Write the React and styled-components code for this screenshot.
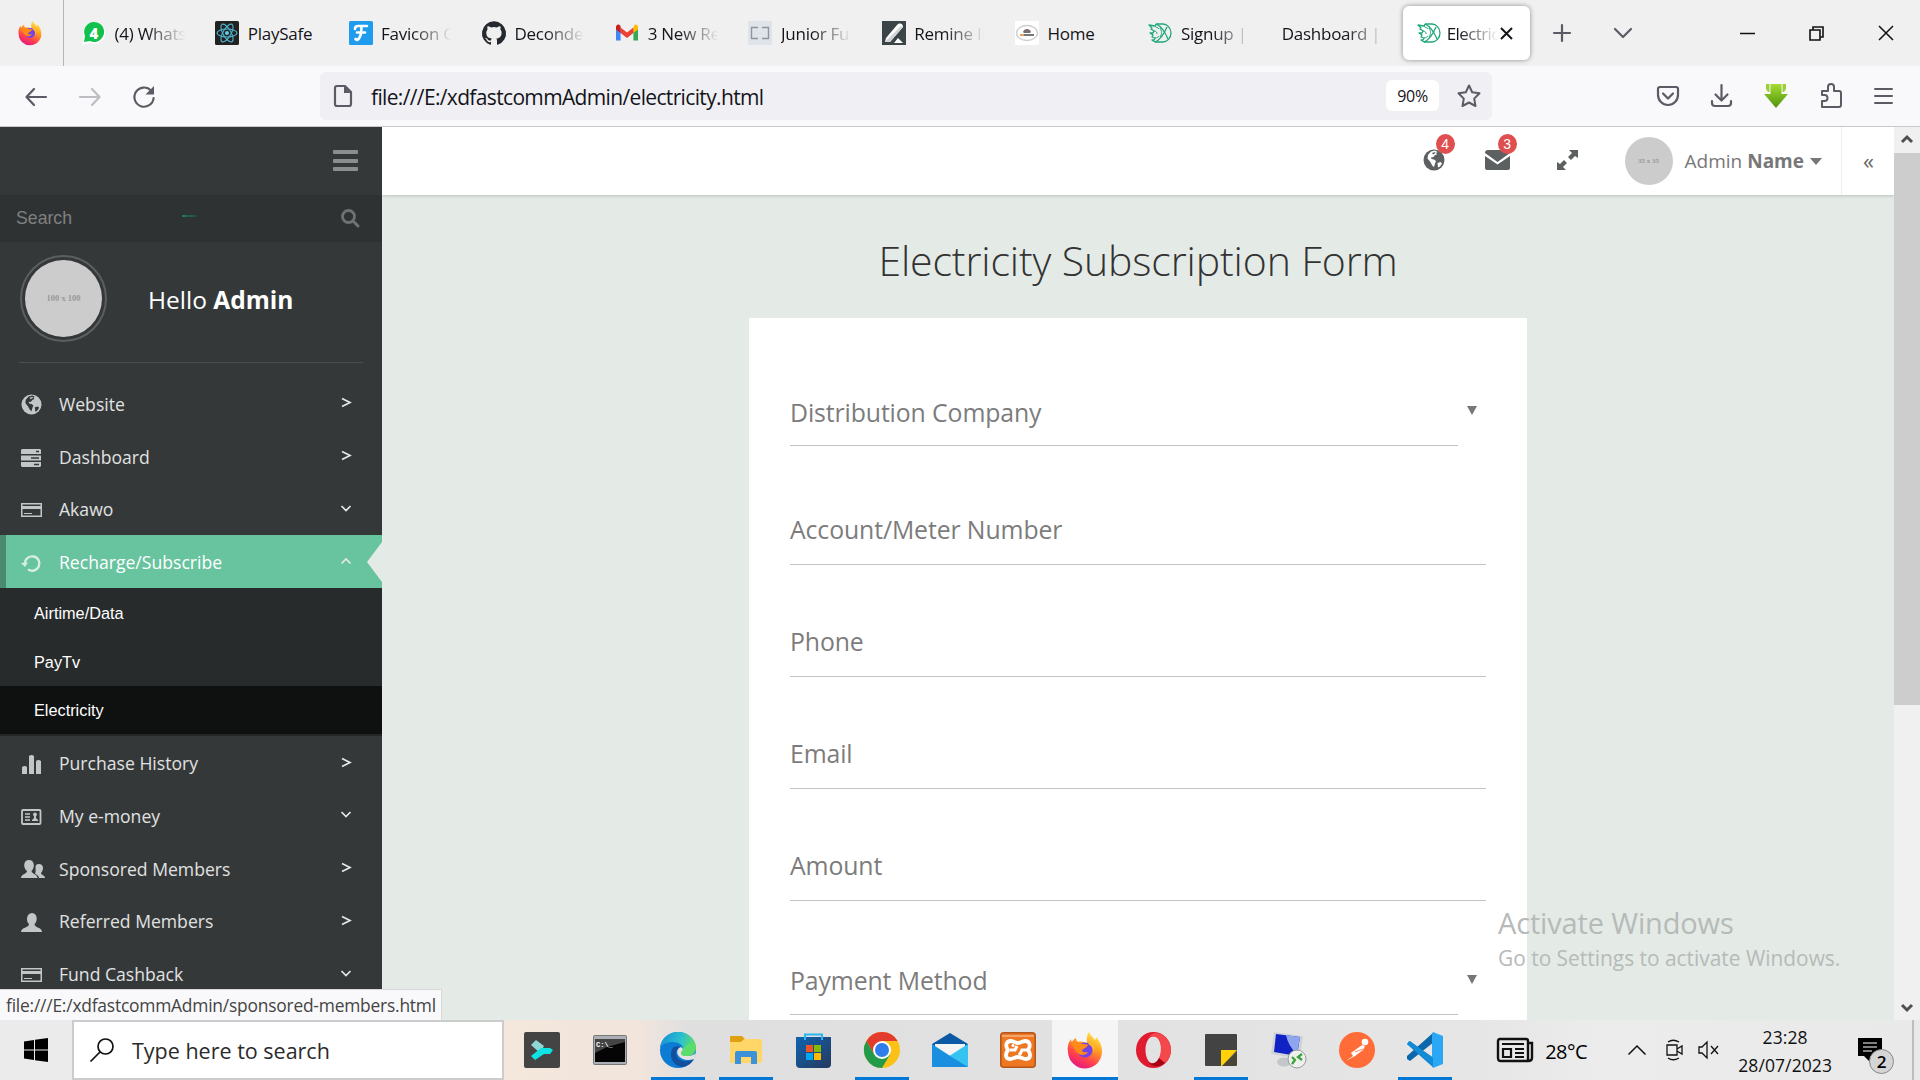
import React from "react";
import styled, { createGlobalStyle, css } from "styled-components";

const ui = `"Open Sans", "Noto Sans", sans-serif`;
const arial = `"Liberation Sans", Arial, sans-serif`;

const GlobalStyle = createGlobalStyle`
  * { box-sizing: border-box; }
  body { margin: 0; background: #e4eae6; font-family: ${ui}; overflow: hidden; }
  svg { display: block; flex: none; overflow: visible; }
`;

const Screen = styled.div`
  width: 1920px;
  height: 1080px;
  display: flex;
  flex-direction: column;
  overflow: hidden;
`;

/* ---------- browser chrome ---------- */

const TabStrip = styled.header`
  height: 66px;
  display: flex;
  align-items: stretch;
  background: #f0f0f0;
`;

const PinnedTab = styled.div`
  width: 64px;
  padding-left: 18px;
  display: flex;
  align-items: center;
  border-right: 1px solid #b5b5b5;
`;

const Tabs = styled.div`
  display: flex;
  align-items: center;
  padding-left: 6px;
`;

const Tab = styled.div`
  width: ${(p) => p.$width || 133.3}px;
  height: 54px;
  padding-left: 12px;
  display: flex;
  align-items: center;
  gap: 8.5px;
`;

const ActiveTab = styled.div`
  width: 127px;
  height: 54px;
  margin-left: 6px;
  padding: 0 17px 0 14px;
  display: flex;
  align-items: center;
  border-radius: 6px;
  background: #fff;
  box-shadow: 0 0 5px rgba(0, 0, 0, 0.42);
`;

const TabLabel = styled.span`
  flex: none;
  width: ${(p) => p.$width || 71}px;
  padding-top: 2px;
  overflow: hidden;
  white-space: nowrap;
  font: 17px/26px ${ui};
  letter-spacing: ${(p) => p.$track || -0.25}px;
  color: #15141a;
  ${(p) =>
    !p.$full &&
    css`
      mask-image: linear-gradient(to right, #000 calc(100% - 40px), transparent 99%);
    `}
`;

const TabActions = styled.div`
  display: flex;
  align-items: center;
  gap: 43px;
  padding-left: 23px;
`;

const WindowControls = styled.div`
  display: flex;
  align-items: center;
  gap: 54px;
  margin-left: auto;
  padding-right: 26px;
`;

const Toolbar = styled.div`
  height: 61px;
  display: flex;
  align-items: center;
  padding-bottom: 1px;
  background: #f9f9fb;
  border-bottom: 1px solid #c8c8cb;
`;

const NavButtons = styled.div`
  width: 320px;
  padding: 2px 0 0 25px;
  display: flex;
  align-items: center;
  gap: 32px;
`;

const AddressBar = styled.div`
  width: 1172px;
  height: 48px;
  padding: 0 11px 0 14px;
  display: flex;
  align-items: center;
  border-radius: 6px;
  background: #f0f0f4;
`;

const Url = styled.span`
  margin-left: 19px;
  padding-top: 2px;
  flex: 1;
  font: 21px/30px ${ui};
  letter-spacing: -0.65px;
  color: #15141a;
`;

const Zoom = styled.span`
  width: 53px;
  height: 31px;
  margin-right: 18px;
  border-radius: 6px;
  background: #fff;
  text-align: center;
  font: 16px/32px ${ui};
  letter-spacing: -0.3px;
  color: #15141a;
`;

const ToolIcons = styled.div`
  margin-left: auto;
  padding-right: 27px;
  display: flex;
  align-items: center;
  gap: 32.3px;
`;

/* ---------- page ---------- */

const Viewport = styled.div`
  height: 893px;
  display: flex;
  position: relative;
`;

const Sidebar = styled.aside`
  width: 382px;
  height: 893px;
  overflow: hidden;
  background: #353839;
  color: #e0e2e2;
`;

const SideHeader = styled.div`
  height: 68px;
  padding: 23px 24px 0 0;
  display: flex;
  justify-content: flex-end;
  box-shadow: 0 1px 3px rgba(0, 0, 0, 0.25);
`;

const Burger = styled.div`
  width: 25px;
  height: 21px;
  display: flex;
  flex-direction: column;
  justify-content: space-between;
`;

const BurgerBar = styled.i`
  height: 4px;
  border-radius: 1px;
  background: #8c8e8e;
`;

const SideSearch = styled.div`
  height: 47px;
  padding: 0 23px 2px 16px;
  display: flex;
  align-items: center;
  justify-content: space-between;
  background: #2f3233;
  font: 17.7px/24px ${arial};
  color: #7e8080;
`;

const LogoSpeck = styled.i`
  width: 15px;
  height: 2px;
  margin: -3px 0 0 -35px;
  border-left: 4px solid #1c7a58;
  background: linear-gradient(to right, #1c6149 60%, #353839);
`;

const Profile = styled.div`
  height: 121px;
  margin: 0 19px;
  padding: 13px 0 0 1px;
  display: flex;
  align-items: flex-start;
  gap: 41px;
  border-bottom: 1px solid #4b4e4f;
`;

const Ring = styled.div`
  width: 87px;
  height: 87px;
  flex: none;
  padding: 3px;
  border: 2px solid #5c5f60;
  border-radius: 50%;
`;

const Portrait = styled.div`
  width: ${(p) => p.$size}px;
  height: ${(p) => p.$size}px;
  flex: none;
  display: flex;
  align-items: center;
  justify-content: center;
  border-radius: 50%;
  background: #ccc;
  color: #999;
  font: bold ${(p) => p.$font}px/1 "Liberation Serif", serif;
`;

const Greeting = styled.div`
  margin-top: 27px;
  white-space: nowrap;
  font: 24.5px/36px ${ui};
  color: #fff;
`;

const Menu = styled.nav`
  padding-top: 14px;
`;

const MenuRow = styled.div`
  height: 52.8px;
  padding: 0 31px 0 ${(p) => (p.$active ? 15 : 21)}px;
  display: flex;
  align-items: center;
  position: relative;
  font: 17.6px/26px ${ui};
  color: ${(p) => (p.$active ? "#fff" : "#e0e2e2")};
  ${(p) =>
    p.$active &&
    css`
      background: #68c39f;
      border-left: 6px solid #4a8a70;
      &::after {
        content: "";
        position: absolute;
        right: 0;
        top: 7px;
        border: 20px solid transparent;
        border-width: 20px 15px 20px 0;
        border-right-color: #e4eae6;
      }
    `}
`;

const MenuIcon = styled.span`
  width: 38px;
  padding-top: 3px;
  flex: none;
`;

const MenuText = styled.span`
  flex: 1;
  padding-top: 1px;
`;

const Submenu = styled.div`
  background: #282b2c;
  border-bottom: 2px solid #232526;
`;

const SubItem = styled.div`
  height: ${(p) => p.$h}px;
  padding-left: 34px;
  display: flex;
  align-items: center;
  font: 16.3px/24px ${arial};
  color: #fff;
  background: ${(p) => (p.$on ? "#0f1111" : "transparent")};
`;

const Main = styled.main`
  width: 1512px;
  display: flex;
  flex-direction: column;
  align-items: center;
  overflow: hidden;
  background: #e4eae6;
`;

const TopBar = styled.div`
  width: 100%;
  height: 68px;
  flex: none;
  display: flex;
  align-items: center;
  justify-content: flex-end;
  background: #fff;
  box-shadow: 0 1px 3px rgba(0, 0, 0, 0.18);
`;

const Notice = styled.div`
  position: relative;
  margin-right: ${(p) => p.$gap}px;
  margin-top: ${(p) => p.$drop || 0}px;
`;

const Count = styled.span`
  position: absolute;
  left: ${(p) => p.$left}px;
  top: ${(p) => p.$top}px;
  width: 19px;
  height: 20px;
  border-radius: 50%;
  background: #e04f4f;
  color: #fff;
  text-align: center;
  font: 14px/20px ${arial};
`;

const UserName = styled.div`
  margin-left: 12px;
  white-space: nowrap;
  font: 19px/26px ${ui};
  letter-spacing: 0;
  color: #777;
`;

const Caret = styled.i`
  margin: 0 19px 0 6px;
  border: 6px solid transparent;
  border-width: 7px 6px 0;
  border-top-color: #777;
`;

const Collapse = styled.div`
  width: 53px;
  height: 68px;
  padding-left: 1px;
  border-left: 1px solid #eee;
  text-align: center;
  font: 22px/66px ${ui};
  color: #666;
`;

const Title = styled.h1`
  margin: 37px 0 0;
  height: 86px;
  font: 300 41px/56px ${ui};
  letter-spacing: -0.12px;
  white-space: nowrap;
  color: #333;
`;

const Card = styled.div`
  width: 778px;
  height: 702px;
  flex: none;
  padding: 38px 41px 0;
  background: #fff;
`;

const Field = styled.div`
  height: ${(p) => p.$h}px;
  margin-right: ${(p) => (p.$select ? 28 : 0)}px;
  padding-bottom: ${(p) => p.$pad}px;
  display: flex;
  align-items: flex-end;
  position: relative;
  border-bottom: 1px solid #c4c4c4;
  font: 24.8px/34px ${ui};
  color: #7c7c7c;
  letter-spacing: -0.1px;
`;

const SelectArrow = styled.i`
  position: absolute;
  right: -19px;
  bottom: 30px;
  border: 5.5px solid transparent;
  border-width: 9px 5.5px 0;
  border-top-color: #777;
`;

const Scrollbar = styled.div`
  width: 26px;
  padding: 8px 0 8px;
  display: flex;
  flex-direction: column;
  align-items: center;
  background: #f0f0f0;
`;

const Thumb = styled.div`
  width: 26px;
  height: 552px;
  margin: 9px 0 auto;
  background: #cdcdcd;
`;

const StatusTip = styled.div`
  position: absolute;
  left: 0;
  bottom: 0;
  width: 442px;
  height: 31px;
  padding-left: 6px;
  background: #f9f9fb;
  border: solid #d9d9d9;
  border-width: 1px 1px 0 0;
  white-space: nowrap;
  font: 17.4px/31px ${ui};
  letter-spacing: -0.21px;
  color: #444;
`;

const Watermark = styled.div`
  position: absolute;
  left: 1498px;
  top: 776px;
  white-space: nowrap;
  color: #b6bab8;
`;

const WatermarkTitle = styled.div`
  font: 29px/40px ${ui};
  letter-spacing: -0.15px;
`;

const WatermarkText = styled.div`
  font: 20.9px/30px ${ui};
`;

/* ---------- taskbar ---------- */

const Taskbar = styled.footer`
  height: 60px;
  display: flex;
  align-items: stretch;
  background: linear-gradient(to right, #ebebeb 72px, #f4e7dc 503px, #f1e5dc 640px, #dfdfe0 690px, #e2e2e2 1120px, #e6e6e6 1480px, #ececec 1600px, #e9e9e9);
`;

const Start = styled.div`
  width: 72px;
  padding: 18px 0 0 24px;
`;

const SearchBox = styled.div`
  width: 432px;
  padding: 2px 0 0 16px;
  display: flex;
  align-items: center;
  gap: 18px;
  border: 2px solid #ccc;
  background: #fff;
  font: 21.5px/30px ${ui};
  letter-spacing: 0;
  color: #2b2b2b;
`;

const Apps = styled.div`
  display: flex;
  padding-left: 4px;
`;

const AppCell = styled.div`
  width: 67.95px;
  display: flex;
  justify-content: center;
`;

const AppFace = styled.div`
  width: ${(p) => (p.$active ? 66 : 54)}px;
  padding-top: 3px;
  display: flex;
  align-items: center;
  justify-content: center;
  border-bottom: 3px solid ${(p) => (p.$open ? "#0078d7" : "transparent")};
  background: ${(p) => (p.$active ? "#f5f5f5" : "transparent")};
  background-clip: padding-box;
`;

const Tray = styled.div`
  flex: 1;
  margin-left: 38px;
  display: flex;
  align-items: center;
`;

const Temperature = styled.span`
  width: 95px;
  padding: 3px 0 0 12px;
  font: 20px/28px ${ui};
  letter-spacing: -0.5px;
`;

const TrayIcons = styled.div`
  display: flex;
  align-items: center;
  gap: 18px;
`;

const Clock = styled.div`
  width: 100px;
  margin-left: 15px;
  padding-top: 1px;
  text-align: center;
  white-space: nowrap;
  font: 17.5px/28px ${ui};
  letter-spacing: 0.1px;
  color: #111;
`;

const Notes = styled.div`
  position: relative;
  margin: 0 30px 0 auto;
`;

const NotesCount = styled.span`
  position: absolute;
  left: 11px;
  top: 11px;
  width: 25px;
  height: 25px;
  border: 1px solid #888;
  border-radius: 50%;
  background: #d5d5d5;
  text-align: center;
  font: 600 17px/23px ${ui};
`;

const PeekEdge = styled.div`
  width: 8px;
  height: 60px;
  border-left: 2px solid #bdbdbd;
`;

/* ---------- drawings ---------- */

const Draw = ({ w, h, box, children, ...rest }) => (
  <svg width={w} height={h} viewBox={box || `0 0 ${w} ${h}`} fill="none" {...rest}>
    {children}
  </svg>
);

const Firefox = ({ s = 24, id }) => (
  <Draw w={s} h={s} box="0 0 36 36">
    <defs>
      <linearGradient id={id} x1="0.8" y1="0" x2="0.3" y2="1">
        <stop offset="0" stopColor="#fff14f" />
        <stop offset="0.4" stopColor="#ff9a1f" />
        <stop offset="0.72" stopColor="#ff3f4f" />
        <stop offset="1" stopColor="#e31587" />
      </linearGradient>
    </defs>
    <path d="M22 0c1 3 4 5 6 8 1-1 1-2 1-3 4 4 6 9 6 14a17 17 0 0 1-34 1c-1-5 0-9 3-13 0 1 0 2 1 3 1-2 2-3 4-4 0 2 1 3 2 4 4-1 7 0 9 2 0-4-1-8 2-12Z" fill={`url(#${id})`} />
    <circle cx="18" cy="18" r="7.6" fill="#7542e5" />
    <path d="M4 12c5-3 8-2 11 0 3 0 5 0 6 1-1 3-5 3-6 6 2 2 4 1 6 1-2 4-9 4-12-1-2-3-3-4-5-7Z" fill="#ff8a16" />
    <path d="M21 12c4 2 6 5 5 9 3-4 2-9-1-12Z" fill="#ffb52b" />
  </Draw>
);

const WhatsApp = () => (
  <Draw w={24} h={24}>
    <path d="M0 24l2-8A11 11 0 1 1 8 22Z" fill="#fff" />
    <path d="M2 21l1-6a10 10 0 1 1 5 5Z" fill="#12c14c" />
    <text x="12" y="17.5" textAnchor="middle" fill="#fff" fontFamily="Open Sans" fontWeight="800" fontSize="15">4</text>
  </Draw>
);

const ReactMark = () => (
  <Draw w={24} h={24}>
    <rect width="24" height="24" rx="1.5" fill="#222" />
    <g stroke="#4fb6d0" strokeWidth="1.1">
      <ellipse cx="12" cy="12" rx="10" ry="4" />
      <ellipse cx="12" cy="12" rx="10" ry="4" transform="rotate(60 12 12)" />
      <ellipse cx="12" cy="12" rx="10" ry="4" transform="rotate(120 12 12)" />
    </g>
    <circle cx="12" cy="12" r="2" fill="#5fd0ec" />
  </Draw>
);

const FaviconMark = () => (
  <Draw w={24} h={24}>
    <rect width="24" height="24" rx="1.5" fill="#209cee" />
    <path d="M6 8c0-2 1-3 3-3h9M12.500 5c0 5-1 11-3 13-1 1-2 1-3 0M8 11.500h8" stroke="#fff" strokeWidth="2.6" strokeLinecap="round" />
  </Draw>
);

const GitHub = () => (
  <Draw w={24} h={24}>
    <path fill="#24292f" d="M12 .3a12 12 0 0 0-3.8 23.4c.6.1.8-.3.8-.6v-2c-3.3.7-4-1.6-4-1.6-.6-1.4-1.4-1.8-1.4-1.8-1-.7.1-.7.1-.7 1.2 0 1.9 1.2 1.9 1.2 1 1.8 2.8 1.3 3.5 1 0-.8.4-1.3.7-1.6-2.7-.3-5.5-1.3-5.5-6 0-1.2.5-2.3 1.3-3.1-.2-.4-.6-1.6 0-3.2 0 0 1-.3 3.4 1.2a11.5 11.5 0 0 1 6 0c2.3-1.5 3.3-1.2 3.3-1.2.6 1.6.2 2.8 0 3.2.9.8 1.3 1.9 1.3 3.2 0 4.6-2.8 5.6-5.5 5.9.5.4.9 1 .9 2.2v3.3c0 .3.1.7.8.6A12 12 0 0 0 12 .3" />
  </Draw>
);

const Gmail = () => (
  <Draw w={24} h={24}>
    <path d="M1 6v13.500h4.600V9.500Z" fill="#4285f4" />
    <path d="M23 6v13.500h-4.600V9.500Z" fill="#34a853" />
    <path d="M18.400 7v5L23 8.500V6c0-2-2-3-3.500-2Z" fill="#fbbc04" />
    <path d="M5.600 6.500 12 11.500l6.400-5v5.500L12 17l-6.400-5Z" fill="#ea4335" />
    <path d="M1 6c0-2 2-3 3.500-2l1.100 1v7L1 8.500Z" fill="#c5221f" />
  </Draw>
);

const Brackets = () => (
  <Draw w={24} h={24}>
    <rect width="24" height="24" fill="#dfe4ea" />
    <path d="M10 6.500H3.500v11H10M14 6.500h6.500v11H14" stroke="#8f959b" strokeWidth="1.4" />
  </Draw>
);

const Remine = () => (
  <Draw w={24} h={24}>
    <rect width="24" height="24" fill="#3b4548" />
    <path d="M4 17 15 4c3-3 6-1 6 2L8 21H3Z" fill="#fff" />
    <path d="M5 19 19 5l2 1L8 21H3Z" fill="#d0d4d5" />
    <path d="M12 22l4-5 5 5Z" fill="#fff" />
  </Draw>
);

const HomeMark = () => (
  <Draw w={24} h={24}>
    <rect width="24" height="24" fill="#fff" />
    <ellipse cx="12" cy="12" rx="10.500" ry="7.500" stroke="#cfcfcf" strokeWidth="1.400" />
    <path d="M8 11c1-4 7-4 8 0l-1 1H9Z" fill="#77706c" />
    <path d="M5 14h4" stroke="#eba15d" strokeWidth="2" />
    <path d="M9 14h10" stroke="#74787a" strokeWidth="2" />
  </Draw>
);

const Bird = () => (
  <Draw w={24} h={24}>
    <g stroke="#20a67b" strokeWidth="1.300" strokeLinejoin="round">
      <path d="M8 3h7c4 0 8 4 8 9s-4 9-8 9H7" />
      <path d="M8 3c5 2 9 8 12 15M7 21c5-2 9-8 12-15" />
      <path d="M12 7c2 3 2 6 0 9" strokeWidth="1" />
      <path d="M8 3 7 5 1 4l3 3-1 1 3 2-1 2H2l3 2-1 2 3 1-1 2h-2l3 2" />
      <path d="M7 5c1 2 3 1 4 3M6 10c2 0 3 1 3 3M7 17c2 0 3-1 4-2" strokeWidth="1" />
    </g>
  </Draw>
);

const line = { stroke: "#5b5b66", strokeWidth: 2.2, strokeLinecap: "round", strokeLinejoin: "round" };

const Globe = ({ s, color, hole }) => (
  <Draw w={s} h={s} box="0 0 22 22">
    <circle cx="11" cy="11" r="10.500" fill={color} />
    <path d="M8 2.500l4-1 2.500 1.500-1.500 1 1 1.500-2 .5-1.500 2-2.500.5.5 1.500 2.500.5 2 1.500-1 2.500-1 3.500C9 17 8.500 14.500 7 12.500L4.500 9.500 5 6Z" fill={hole} />
    <path d="M14.500 14l3-1 1.500 1.500-2 3-2 1Z" fill={hole} />
    <path d="M9 4l3-1 .5 1-2.500 1.500Z" fill={color} />
  </Draw>
);

const glyph = "#c3c6c6";
const glyphs = {
  globe: <Globe s={21} color={glyph} hole="#353839" />,
  server: (
    <Draw w={21} h={18}>
      <path d="M1 0h18l1 1v4H0V1ZM0 6.500h20v5H0ZM0 13h20v4l-1 1H1l-1-1Z" fill={glyph} />
      <path d="M15 2.500h3M10 9h8M13 15.500h5" stroke="#353839" strokeWidth="1.500" />
    </Draw>
  ),
  card: (
    <Draw w={21} h={14}>
      <path d="M.75.75h19.500v12.500H.75Z" stroke={glyph} strokeWidth="1.500" />
      <path d="M1 4.500h19" stroke={glyph} strokeWidth="3" />
      <path d="M3 10.500h8" stroke={glyph} strokeWidth="1" />
    </Draw>
  ),
  refresh: (
    <Draw w={21} h={17}>
      <path d="M4 8.500a7.200 7.200 0 1 1 3 5.900" stroke="#d5ede3" strokeWidth="2.400" />
      <path d="M0 8l7-.5L4 12Z" fill="#d5ede3" />
    </Draw>
  ),
  chart: (
    <Draw w={21} h={19}>
      <path d="M1 19v-7q3-2 5 0v7ZM8 19V1q2.500-2 5 0v18ZM15 19V6q2.500-2 5 0v13Z" fill={glyph} />
    </Draw>
  ),
  idcard: (
    <Draw w={21} h={16}>
      <rect x="1" y="1" width="18.500" height="14" rx="1" stroke={glyph} strokeWidth="1.800" />
      <path d="M4 5h5M4 8h5M4 11h5" stroke={glyph} strokeWidth="1.400" />
      <circle cx="14" cy="5.500" r="1.900" fill={glyph} />
      <path d="M13 6h2v3l2 2v1h-6v-1l2-2Z" fill={glyph} />
    </Draw>
  ),
  people: (
    <Draw w={25} h={19}>
      <path d="M8 0c6 0 6 8 2.500 11 0 3 6 3 6 7H0c0-4 6-4 6-7C2 8 2 0 8 0Z" fill={glyph} />
      <path d="M18 4c5 0 5 6 2 9 0 2 4 2 4 5h-6c0-2-3-4-4-4 2-4-2-10 4-10Z" fill={glyph} />
    </Draw>
  ),
  person: (
    <Draw w={21} h={19}>
      <path d="M11 0c6 0 5.500 9 2.500 11 0 4 7.500 3 7.500 8H0c0-5 8-4 8-8C5 9 5 0 11 0Z" fill={glyph} />
    </Draw>
  ),
};

const arrows = {
  right: "M1 1.500 9 5.500 1 9.500",
  down: "M.5 3 5 7.500 9.500 3",
  up: "M.5 7.500 5 3 9.500 7.500",
};

const MenuArrow = ({ dir }) => (
  <Draw w={10} h={11} style={{ marginTop: -1 }}>
    <path d={arrows[dir]} stroke="#e6e8e8" strokeWidth="1.700" />
  </Draw>
);

const Item = ({ icon, label, dir = "right", active }) => (
  <MenuRow $active={active}>
    <MenuIcon>{glyphs[icon]}</MenuIcon>
    <MenuText>{label}</MenuText>
    <MenuArrow dir={dir} />
  </MenuRow>
);

const apps = [
  {
    art: (
      <Draw w={36} h={36}>
        <rect width="36" height="36" rx="2" fill="#444" />
        <path d="m12 8 8 6-4 7-9-8Z" fill="#8fd8d4" />
        <path d="M7 24l10-8h9l3 2-3 4h-6l-9 6Z" fill="#0fe3e3" strokeLinejoin="round" />
      </Draw>
    ),
  },
  {
    art: (
      <Draw w={34} h={30}>
        <rect x=".5" y=".5" width="33" height="29" rx="1" fill="#aab0b6" stroke="#777" />
        <rect x="2" y="4" width="30" height="23" fill="#050505" />
        <path d="M2 4h30v3L14 12 2 18Z" fill="#444" />
        <text x="3" y="11.500" fontSize="7" fontFamily="Liberation Mono" fontWeight="bold" fill="#fff">C:\_</text>
      </Draw>
    ),
  },
  {
    open: true,
    art: (
      <Draw w={36} h={36}>
        <defs>
          <linearGradient id="edgeTop" x1="0" y1="0.300" x2="1" y2="0.500">
            <stop offset="0" stopColor="#1593d4" />
            <stop offset="0.550" stopColor="#2cbfd0" />
            <stop offset="1" stopColor="#62e060" />
          </linearGradient>
        </defs>
        <circle cx="18" cy="18" r="18" fill="#0b7bd4" />
        <path d="M0 16C1 6 9 0 18 0c11 0 18 8 18 15 0 6-4 9-9 9-4 0-6-1-6-3 0-1 2-2 2-4 0-4-4-7-10-7C7 10 2 12 0 16Z" fill="url(#edgeTop)" />
        <path d="M13 16c-5 7 0 19 10 19 5-1 9-4 11-8-9 5-18 1-18-6 0-3 3-5 5-6-3-1-6-1-8 1Z" fill="#124f9d" />
        <path d="M21 15c-3 1-5 4-3 8 3 5 10 6 16 4l2-6c-2 2-5 3-9 3s-6-1-6-3c0-1 2-2 2-4Z" fill="#e3e3e3" />
        <path d="M36 15c0 6-4 9-9 9-4 0-6-1-6-3 0-1 2-2 2-4l6-6Z" fill="#5cdc6a" />
      </Draw>
    ),
  },
  {
    open: true,
    art: (
      <Draw w={32} h={28}>
        <path d="M0 1q0-1 1-1h11l3 3-3 3H0Z" fill="#e0a010" />
        <path d="M0 6h11l3-3h16q2 0 2 2v20q0 2-2 2H2q-2 0-2-2Z" fill="#ffd667" />
        <path d="M5 28V17q0-2 2-2h18q2 0 2 2v11h-6v-7H11v7Z" fill="#3c92d8" />
      </Draw>
    ),
  },
  {
    art: (
      <Draw w={36} h={36}>
        <defs>
          <linearGradient id="store" x1="0" y1="0" x2="1" y2="1">
            <stop offset="0" stopColor="#0f63b0" />
            <stop offset="1" stopColor="#26395e" />
          </linearGradient>
        </defs>
        <path d="M0 5h35v27q0 4-4 4H4q-4 0-4-4Z" fill="url(#store)" />
        <path d="M9 8V2.500h17V8" stroke="#2ab5ee" strokeWidth="2" />
        <path d="M10 13h7v7h-7Z" fill="#f35325" />
        <path d="M18 13h7v7h-7Z" fill="#81bc06" />
        <path d="M10 21h7v7h-7Z" fill="#05a6f0" />
        <path d="M18 21h7v7h-7Z" fill="#ffba08" />
      </Draw>
    ),
  },
  {
    open: true,
    art: (
      <Draw w={36} h={36}>
        <circle cx="18" cy="18" r="18" fill="#fbc116" />
        <path d="M18 9h15.600A18 18 0 0 0 2.400 9L10 22Z" fill="#e33b2e" />
        <path d="M2.400 9a18 18 0 0 0 15.600 27l8-13.500H10.300Z" fill="#219a4a" />
        <circle cx="18" cy="18" r="9" fill="#fff" />
        <circle cx="18" cy="18" r="7" fill="#2f7de9" />
      </Draw>
    ),
  },
  {
    art: (
      <Draw w={36} h={34}>
        <path d="M0 11 18 0l18 11v7H0Z" fill="#0b58a5" />
        <path d="M3 11h30v6L18 25 3 17Z" fill="#f3f3f3" />
        <path d="M0 11 18 23 0 34Z" fill="#1fa0e8" />
        <path d="M36 11v23H0L36 11Z" fill="#35c3f2" />
        <path d="M0 12 36 34H0Z" fill="#1b8fdf" />
      </Draw>
    ),
  },
  {
    art: (
      <Draw w={36} h={36}>
        <rect x=".8" y=".8" width="34.400" height="34.400" rx="3" fill="#ee7722" stroke="#b5571b" strokeWidth="1.600" />
        <path d="M2 4h32" stroke="#f5a56a" strokeWidth="2" />
        <path d="M11 9c2 0 4 2 7 2s5-2 7-2c5 0 6 5 3 9 3 4 3 9-2 9-3 0-5-2-8-2s-5 2-8 2c-5 0-5-5-2-9-3-4-2-9 3-9Z" stroke="#fff" strokeWidth="3.800" strokeLinejoin="round" />
        <path d="M10 18h5q1-2 2-4M28 18h-6q-1 3-3 5" stroke="#fff" strokeWidth="3.200" />
        <circle cx="13" cy="13.500" r="1.500" fill="#fff" />
      </Draw>
    ),
  },
  { open: true, active: true, art: <Firefox s={36} id="ffTask" /> },
  {
    art: (
      <Draw w={35} h={36}>
        <path fillRule="evenodd" d="M17.500 0a17.500 18 0 1 0 0 36 17.500 18 0 1 0 0-36Zm0 4.500c5 0 8 6 8 13.500s-3 13.500-8 13.500-8-6-8-13.500 3-13.500 8-13.500Z" fill="#e01a2f" />
        <path d="M12 6C16-1 24 0 29 5c8 8 8 18 0 26-5 4-12 5-17-1 4 3 9 1 11-4 3-7 2-14 0-18-3-5-8-5-11-2Z" fill="#f4484d" />
        <path d="M12 30c5 6 12 5 17 1l-6-5c-2 5-7 7-11 4Z" fill="#a70014" />
      </Draw>
    ),
  },
  {
    open: true,
    art: (
      <Draw w={32} h={32}>
        <path d="M0 1q0-1 1-1h30q1 0 1 1v16L17 32H1q-1 0-1-1Z" fill="#434343" />
        <path d="M16 16h16L17 32h-1Z" fill="#ffd20a" />
        <path d="M32 17v14q0 1-1 1H17Z" fill="#4a4634" />
      </Draw>
    ),
  },
  {
    art: (
      <Draw w={36} h={36}>
        <ellipse cx="13" cy="30" rx="7" ry="4.500" fill="#c4c7ca" />
        <path d="m3 0 29 4-3 23L0 22Z" fill="#cfd3d8" />
        <path d="m5 2 24 3-3 19L3 20Z" fill="#1022c4" />
        <path d="m15 3 14 2-3 17Q17 14 15 3Z" fill="#8fa5ef" />
        <circle cx="26" cy="27" r="9" fill="#eef0ee" stroke="#999" />
        <path d="m21 25 3 3-3 4M31 22l-4 3 4 3" stroke="#36a336" strokeWidth="2.200" />
      </Draw>
    ),
  },
  {
    art: (
      <Draw w={36} h={36}>
        <circle cx="18" cy="18" r="18" fill="#ff6c37" />
        <circle cx="26" cy="10" r="3.300" fill="#fff" />
        <path d="M23 13 12 21l2 3-7 5 9-5 8-6 2-4Z" fill="#fff" />
        <path d="M16 20l8-3" stroke="#ff6c37" strokeWidth=".8" />
      </Draw>
    ),
  },
  {
    open: true,
    art: (
      <Draw w={36} h={36}>
        <path d="m2 9-2 3 27 24V26Z" fill="#1b8fdd" />
        <path d="M0 24v3l3 2L27 10V0Z" fill="#0b67ab" />
        <path d="m26 0 10 4v28l-10 4-1-3V3Z" fill="#2aa8f5" />
        <path d="m0 12 3-3 23 17v9Z" fill="#128ad6" />
      </Draw>
    ),
  },
];

const fields = [
  { label: "Distribution Company", h: 89.5, pad: 16, select: true },
  { label: "Account/Meter Number", h: 119, pad: 18 },
  { label: "Phone", h: 112, pad: 18 },
  { label: "Email", h: 112, pad: 18 },
  { label: "Amount", h: 112, pad: 18 },
  { label: "Payment Method", h: 114, pad: 17, select: true },
];

const tabs = [
  { icon: <WhatsApp />, label: "(4) Whats" },
  { icon: <ReactMark />, label: "PlaySafe", full: true },
  { icon: <FaviconMark />, label: "Favicon C" },
  { icon: <GitHub />, label: "Deconde" },
  { icon: <Gmail />, label: "3 New Re" },
  { icon: <Brackets />, label: "Junior Fu" },
  { icon: <Remine />, label: "Remine In" },
  { icon: <HomeMark />, label: "Home", full: true },
  { icon: <Bird />, label: "Signup | S" },
];

export default function App() {
  return (
    <Screen>
      <GlobalStyle />
      <TabStrip>
        <PinnedTab><Firefox id="ffTab" /></PinnedTab>
        <Tabs>
          {tabs.map((t) => (
            <Tab key={t.label}>
              {t.icon}
              <TabLabel $full={t.full}>{t.label}</TabLabel>
            </Tab>
          ))}
          <Tab $width={127}>
            <TabLabel $width={104}>Dashboard | x</TabLabel>
          </Tab>
          <ActiveTab>
            <Bird />
            <TabLabel $width={52} $track={-0.6} style={{ marginLeft: 6, marginRight: 1 }}>Electric</TabLabel>
            <Draw w={13} h={13}><path d="m1 1 11 11M12 1 1 12" stroke="#15141a" strokeWidth="2" /></Draw>
          </ActiveTab>
        </Tabs>
        <TabActions>
          <Draw w={18} h={18}><path d="M9 1v16M1 9h16" {...line} /></Draw>
          <Draw w={18} h={10}><path d="m1 1 8 8 8-8" {...line} /></Draw>
        </TabActions>
        <WindowControls>
          <Draw w={15} h={15}><path d="M0 7.500h15" stroke="#111" strokeWidth="1.500" /></Draw>
          <Draw w={15} h={15}><path d="M1 4h10v10H1ZM4 4V1h10v10h-3" stroke="#111" strokeWidth="1.600" /></Draw>
          <Draw w={16} h={16}><path d="m1 1 14 14M15 1 1 15" stroke="#111" strokeWidth="1.500" /></Draw>
        </WindowControls>
      </TabStrip>

      <Toolbar>
        <NavButtons>
          <Draw w={22} h={18}><path d="M21 9H2M9 1 1.500 9 9 17" {...line} /></Draw>
          <Draw w={22} h={18}><path d="M1 9h19M13 1l7.500 8-7.500 8" {...line} stroke="#bdbdc3" /></Draw>
          <Draw w={22} h={22}>
            <path d="M18 4.500A9.600 9.600 0 1 0 20.600 12" {...line} />
            <path d="M21 0v8.500h-8.500Z" fill="#5b5b66" />
          </Draw>
        </NavButtons>
        <AddressBar>
          <Draw w={18} h={22}>
            <path d="M3 1h8l6 6v12q0 2-2 2H3q-2 0-2-2V3q0-2 2-2Z" {...line} />
            <path d="M10 1v7h7Z" fill="#5b5b66" />
          </Draw>
          <Url>file:///E:/xdfastcommAdmin/electricity.html</Url>
          <Zoom>90%</Zoom>
          <Draw w={24} h={24}><path d="m12 1.500 3.200 6.800 7.300 1-5.300 5.300 1.300 7.400L12 18.500 5.500 22l1.300-7.400L1.500 9.300l7.300-1Z" {...line} strokeWidth="2" /></Draw>
        </AddressBar>
        <ToolIcons>
          <Draw w={22} h={20}>
            <path d="M3 1h16q2 0 2 2v6a10 10 0 0 1-20 0V3q0-2 2-2Z" {...line} />
            <path d="m6 7.500 5 5 5-5" {...line} />
          </Draw>
          <Draw w={21} h={23}>
            <path d="M10.500 1v15M4.500 10.500l6 6 6-6M1 17v2q0 3 3 3h13q3 0 3-3v-2" {...line} />
          </Draw>
          <Draw w={24} h={24}>
            <defs>
              <linearGradient id="dl" x1="0" y1="0" x2="0" y2="1">
                <stop offset="0" stopColor="#a6dc2e" />
                <stop offset="1" stopColor="#4f9412" />
              </linearGradient>
            </defs>
            <path d="M2 0h3.500v8H4L2 5ZM22 0h-3.500v8H20l2-3Z" fill="#9ace3a" />
            <path d="M6.500 0h11v10H24L12 24 0 10h6.500Z" fill="url(#dl)" />
          </Draw>
          <Draw w={21} h={25}>
            <path d="M1 24V18h2.500a3 3 0 0 0 0-6H1V8h6V4a3 3 0 0 1 6 0v4h5q2 0 2 2v12q0 2-2 2Z" {...line} strokeWidth="2" />
          </Draw>
          <Draw w={19} h={16}><path d="M1 1h17M1 8h17M1 15h17" {...line} strokeWidth="2" /></Draw>
        </ToolIcons>
      </Toolbar>

      <Viewport>
        <Sidebar>
          <SideHeader>
            <Burger><BurgerBar /><BurgerBar /><BurgerBar /></Burger>
          </SideHeader>
          <SideSearch>
            <span>Search</span>
            <LogoSpeck />
            <Draw w={18} h={18}>
              <circle cx="7.500" cy="7.500" r="6" stroke="#707272" strokeWidth="2.800" />
              <path d="m12 12 5 5" stroke="#707272" strokeWidth="3" strokeLinecap="round" />
            </Draw>
          </SideSearch>
          <Profile>
            <Ring><Portrait $size={77} $font={8.5}>100 x 100</Portrait></Ring>
            <Greeting>Hello <b>Admin</b></Greeting>
          </Profile>
          <Menu>
            <Item icon="globe" label="Website" />
            <Item icon="server" label="Dashboard" />
            <Item icon="card" label="Akawo" dir="down" />
            <Item icon="refresh" label="Recharge/Subscribe" dir="up" active />
            <Submenu>
              <SubItem $h={50}>Airtime/Data</SubItem>
              <SubItem $h={47.5}>PayTv</SubItem>
              <SubItem $h={48.5} $on>Electricity</SubItem>
            </Submenu>
            <Item icon="chart" label="Purchase History" />
            <Item icon="idcard" label="My e-money" dir="down" />
            <Item icon="people" label="Sponsored Members" />
            <Item icon="person" label="Referred Members" />
            <Item icon="card" label="Fund Cashback" dir="down" />
          </Menu>
        </Sidebar>

        <Main>
          <TopBar>
            <Notice $gap={40} $drop={-3}>
              <Globe s={22} color="#5d6060" hole="#fff" />
              <Count $left={13} $top={-15}>4</Count>
            </Notice>
            <Notice $gap={47} $drop={-2}>
              <Draw w={25} h={20}>
                <path d="M0 3q0-3 3-3h19q3 0 3 3L12.500 12Z" fill="#5d6060" />
                <path d="m0 6 12.500 8.500L25 6v12q0 2-2 2H2q-2 0-2-2Z" fill="#5d6060" />
              </Draw>
              <Count $left={13} $top={-16}>3</Count>
            </Notice>
            <Notice $gap={47} $drop={-2}>
              <Draw w={21} h={20}>
                <path d="M12 0h9v8l-3-2-4 4-3-3 4-4ZM9 20H0v-8l3 2 4-4 3 3-4 4Z" fill="#5d6060" />
              </Draw>
            </Notice>
            <Portrait $size={48} $font={7}>35 x 35</Portrait>
            <UserName>Admin <b>Name</b></UserName>
            <Caret />
            <Collapse>«</Collapse>
          </TopBar>
          <Title>Electricity Subscription Form</Title>
          <Card>
            {fields.map((f) => (
              <Field key={f.label} $h={f.h} $pad={f.pad} $select={f.select}>
                {f.label}
                {f.select && <SelectArrow />}
              </Field>
            ))}
          </Card>
        </Main>

        <Scrollbar>
          <Draw w={12} h={9}><path d="m1 7 5-5 5 5" stroke="#505050" strokeWidth="3" /></Draw>
          <Thumb />
          <Draw w={12} h={9}><path d="m1 2 5 5 5-5" stroke="#505050" strokeWidth="3" /></Draw>
        </Scrollbar>

        <StatusTip>file:///E:/xdfastcommAdmin/sponsored-members.html</StatusTip>
        <Watermark>
          <WatermarkTitle>Activate Windows</WatermarkTitle>
          <WatermarkText>Go to Settings to activate Windows.</WatermarkText>
        </Watermark>
      </Viewport>

      <Taskbar>
        <Start>
          <Draw w={24} h={24}>
            <path d="M0 3.500 10 2v9.500H0ZM11 1.800 24 0v11.500H11ZM0 12.500h10V22L0 20.500ZM11 12.500h13V24l-13-1.800Z" fill="#000" />
          </Draw>
        </Start>
        <SearchBox>
          <Draw w={24} h={24} style={{ marginTop: -2 }}>
            <circle cx="15.500" cy="8.500" r="7.500" stroke="#111" strokeWidth="1.700" />
            <path d="M10 14 .5 23.500" stroke="#111" strokeWidth="1.700" />
          </Draw>
          Type here to search
        </SearchBox>
        <Apps>
          {apps.map((a, i) => (
            <AppCell key={i}>
              <AppFace $open={a.open} $active={a.active}>{a.art}</AppFace>
            </AppCell>
          ))}
        </Apps>
        <Tray>
          <Draw w={36} h={24}>
            <path d="M3 1h26q2 0 2 2v20H4q-3 0-3-3V3q0-2 2-2ZM31 5h4v15q0 3-4 3" stroke="#111" strokeWidth="2.400" />
            <path d="M5 6h22M18 11h9M18 15h9M18 19h9" stroke="#111" strokeWidth="2" />
            <path d="M6 11h8v8H6Z" stroke="#111" strokeWidth="2.200" />
          </Draw>
          <Temperature>28°C</Temperature>
          <TrayIcons>
            <Draw w={18} h={10}><path d="m.5 9.500 8.500-8.500 8.500 8.500" stroke="#111" strokeWidth="1.500" /></Draw>
            <Draw w={17} h={22} style={{ marginLeft: 2 }}>
              <path d="M1 6h10v10H1ZM11 10l5-3v8l-5-3M2 3q5-3.500 11 0M2 19q5 3.500 11 0" stroke="#111" strokeWidth="1.300" />
            </Draw>
            <Draw w={22} h={18} style={{ marginLeft: -3 }}>
              <path d="M1 6h3l5-5v16l-5-5H1ZM13 5l7 8M20 5l-7 8" stroke="#111" strokeWidth="1.300" />
            </Draw>
          </TrayIcons>
          <Clock>23:28<br />28/07/2023</Clock>
          <Notes>
            <Draw w={24} h={24}>
              <path d="M0 0h24v18H12v6l-6-6H0Z" fill="#000" />
              <path d="M5 5h14M5 9h14M5 13h9" stroke="#fff" strokeWidth="1.200" />
            </Draw>
            <NotesCount>2</NotesCount>
          </Notes>
          <PeekEdge />
        </Tray>
      </Taskbar>
    </Screen>
  );
}
